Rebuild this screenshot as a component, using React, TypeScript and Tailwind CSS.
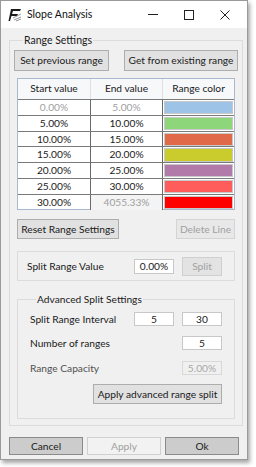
import React from "react";

const font = { fontFamily: 'Lato, "Noto Sans", sans-serif' };

const rows = [
  { s: "0.00%", e: "5.00%", c: "#9dc3e6", sDis: true, eDis: true },
  { s: "5.00%", e: "10.00%", c: "#8ed67a" },
  { s: "10.00%", e: "15.00%", c: "#e0694a" },
  { s: "15.00%", e: "20.00%", c: "#c9cc2c" },
  { s: "20.00%", e: "25.00%", c: "#b27aa8" },
  { s: "25.00%", e: "30.00%", c: "#ff5c5c" },
  { s: "30.00%", e: "4055.33%", c: "#ff0000", eDis: true },
];

function Btn({ children, className = "", disabled = false }: { children: React.ReactNode; className?: string; disabled?: boolean }) {
  return (
    <div
      className={
        "flex items-center justify-center border text-[10.2px] leading-none whitespace-nowrap " +
        (disabled ? "border-[#d4d4d4] bg-[#e8e8e8] text-[#a0a0a0] " : "border-[#adadad] bg-[#e1e1e1] text-[#1a1a1a] ") +
        className
      }
    >
      {children}
    </div>
  );
}

function Input({ children, className = "", disabled = false }: { children: React.ReactNode; className?: string; disabled?: boolean }) {
  return (
    <div
      className={
        "flex items-center justify-center border text-[10.2px] leading-none whitespace-nowrap " +
        (disabled ? "border-[#d8d8d8] bg-[#f0f0f0] text-[#a8a8a8] " : "border-[#c8c8c8] bg-white text-[#1a1a1a] ") +
        className
      }
    >
      {children}
    </div>
  );
}

export default function App() {
  return (
    <div className="w-[256px] h-[467px] bg-white" style={font}>
      <div className="w-[248px] h-[460px] border border-[#9a9a9a] flex flex-col shadow-[2px_3px_4px_rgba(0,0,0,0.35)]">
        {/* Title bar */}
        <div className="h-[27px] bg-white flex items-center shrink-0">
          <svg width="14" height="14" viewBox="0 0 14 14" className="ml-[7px]">
            <path d="M3 1 H13 L12 3 H5 L4 6 H10 L9 8 H3.5 L2 13 H0.5 Z" fill="#1a1a1a" />
            <path d="M5 10 L13 6 M6 12 L13 9 M8 13 L13 11" stroke="#888" strokeWidth="0.9" />
          </svg>
          <span className="ml-[5px] text-[10.5px] text-[#111]">Slope Analysis</span>
          <div className="ml-auto flex items-center">
            <div className="w-[36px] flex justify-center">
              <div className="w-[10px] h-px bg-[#222]" />
            </div>
            <div className="w-[36px] flex justify-center">
              <div className="w-[10px] h-[10px] border border-[#222]" />
            </div>
            <div className="w-[36px] flex justify-center mr-[4px]">
              <svg width="10" height="10" viewBox="0 0 10 10">
                <path d="M0.5 0.5 L9.5 9.5 M9.5 0.5 L0.5 9.5" stroke="#222" strokeWidth="1" />
              </svg>
            </div>
          </div>
        </div>

        {/* Body */}
        <div className="flex-1 bg-[#f0f0f0] flex flex-col px-[8px]">
          <fieldset className="mt-[6px] border border-[#dcdcdc] px-[7px] pb-[5px] h-[392px]">
            <legend className="ml-[6px] px-px text-[10.5px] text-[#1a1a1a] leading-[13px]">Range Settings</legend>
            <div className="flex justify-between mt-[3px] -mx-[3px]">
              <Btn className="w-[95px] h-[21px]">Set previous range</Btn>
              <Btn className="w-[114px] h-[21px]">Get from existing range</Btn>
            </div>

            {/* Table */}
            <div className="mt-[7px] border border-[#a9b8cc] bg-white w-[218px]">
              <div className="grid grid-cols-[73px_72px_71px] h-[20px] bg-[#f6f8fa] text-[10.2px] text-[#1a1a1a]">
                <div className="flex items-center justify-center border-r border-[#e0e0e0]">Start value</div>
                <div className="flex items-center justify-center border-r border-[#e0e0e0]">End value</div>
                <div className="flex items-center justify-center">Range color</div>
              </div>
              {rows.map((r, i) => (
                <div key={i} className="grid grid-cols-[73px_72px_71px] h-[15.75px] text-[10.2px] border-t border-[#7a7a7a]">
                  <div className={"flex items-center justify-center border-r border-[#6a6a6a] " + (r.sDis ? "text-[#a0a0a0]" : "text-[#1a1a1a]")}>{r.s}</div>
                  <div className={"flex items-center justify-center border-r border-[#6a6a6a] " + (r.eDis ? "text-[#a0a0a0] " : "text-[#1a1a1a] ") + (r.eDis && !r.sDis ? "bg-[#f4f4f4]" : "")}>{r.e}</div>
                  <div className="p-[1px]">
                    <div className="w-full h-full border border-[#c8c8c8]" style={{ backgroundColor: r.c }} />
                  </div>
                </div>
              ))}
            </div>

            <div className="flex justify-between mt-[9px] w-[218px]">
              <Btn className="w-[102px] h-[20px]">Reset Range Settings</Btn>
              <Btn disabled className="w-[59px] h-[20px]">Delete Line</Btn>
            </div>

            {/* Split box */}
            <div className="mt-[12px] w-[218px] h-[30px] border border-[#dcdcdc] flex items-center">
              <span className="ml-[9px] text-[10.2px] text-[#1a1a1a]">Split Range Value</span>
              <Input className="ml-auto w-[40px] h-[15px]">0.00%</Input>
              <Btn disabled className="ml-[8px] mr-[12px] w-[40px] h-[19px] !bg-[#e3e3e3] !border-[#cfcfcf]">Split</Btn>
            </div>

            {/* Advanced */}
            <fieldset className="mt-[12px] w-[218px] h-[126px] border border-[#dcdcdc] px-[12px]">
              <legend className="ml-[6px] px-px text-[10.2px] text-[#1a1a1a] leading-[13px]">Advanced Split Settings</legend>
              <div className="flex items-center mt-[6px] h-[14px]">
                <span className="text-[10.2px] text-[#1a1a1a]">Split Range Interval</span>
                <Input className="ml-auto w-[40px] h-[14px]">5</Input>
                <Input className="ml-[8px] w-[40px] h-[14px]">30</Input>
              </div>
              <div className="flex items-center mt-[10px] h-[14px]">
                <span className="text-[10.2px] text-[#1a1a1a]">Number of ranges</span>
                <Input className="ml-auto w-[40px] h-[14px]">5</Input>
              </div>
              <div className="flex items-center mt-[11px] h-[14px]">
                <span className="text-[10.2px] text-[#505050]">Range Capacity</span>
                <Input disabled className="ml-auto w-[40px] h-[14px]">5.00%</Input>
              </div>
              <div className="flex justify-end mt-[9px]">
                <Btn className="w-[129px] h-[20px]">Apply advanced range split</Btn>
              </div>
            </fieldset>
          </fieldset>

          <div className="flex justify-between mt-[11px]">
            <Btn className="w-[74px] h-[18px] !bg-[#cccccc] !border-[#8a8a8a]">Cancel</Btn>
            <Btn disabled className="w-[74px] h-[18px] !bg-[#f2f2f2] !border-[#d0d0d0]">Apply</Btn>
            <Btn className="w-[74px] h-[18px] !bg-[#cccccc] !border-[#8a8a8a]">Ok</Btn>
          </div>
        </div>
      </div>
    </div>
  );
}
